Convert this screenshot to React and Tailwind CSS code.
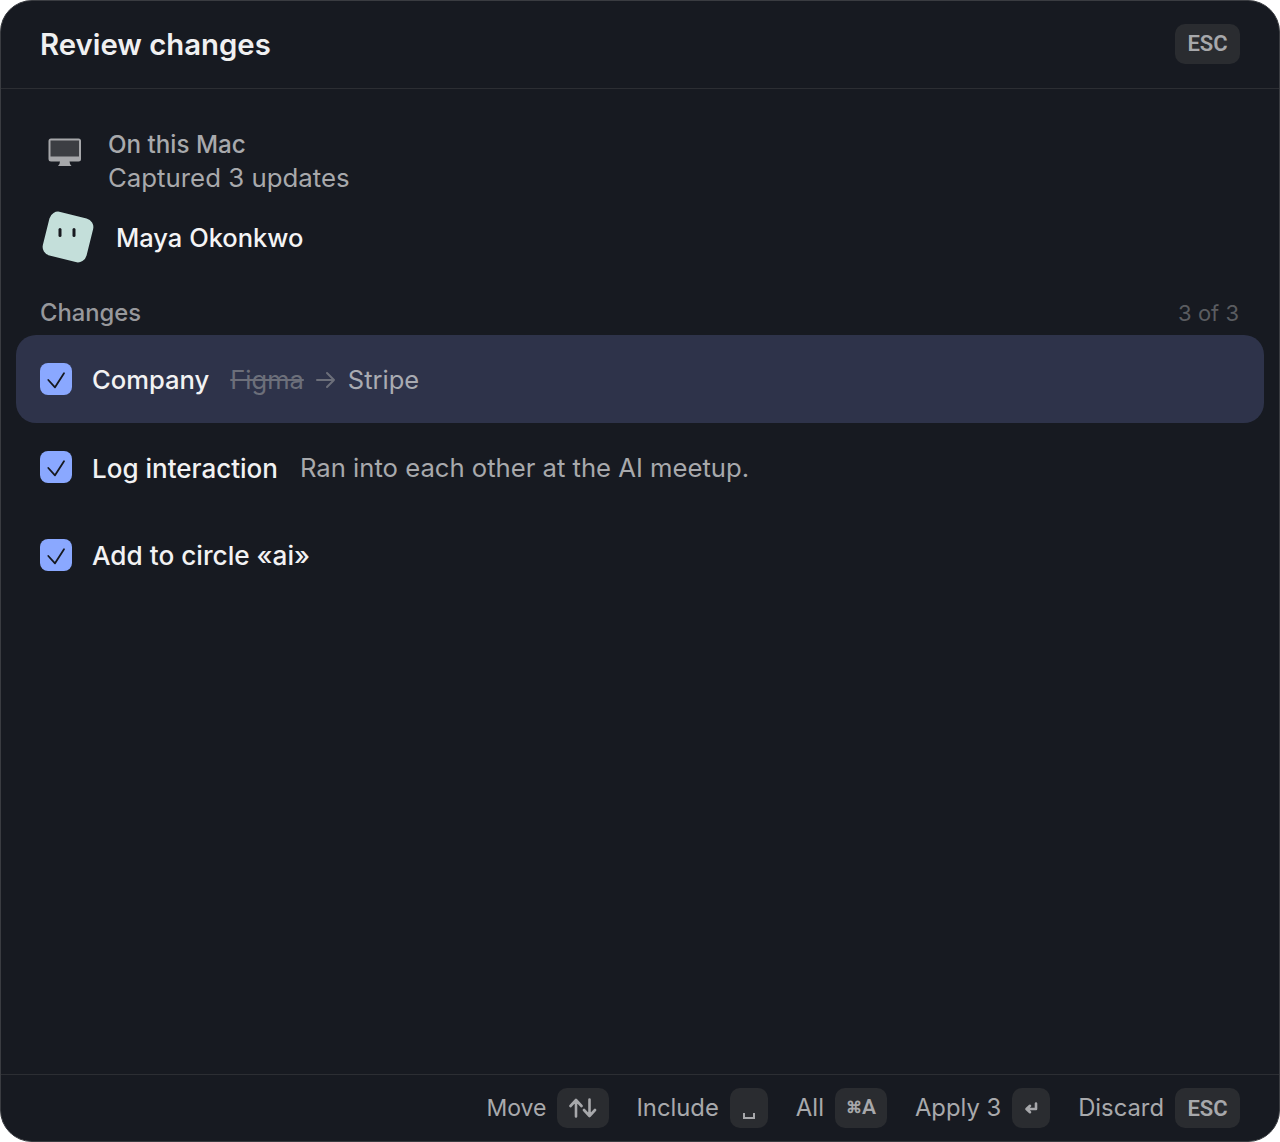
function Check() {
  return (
    <span className="flex h-8 w-8 shrink-0 items-center justify-center rounded-lg bg-[#8aa8ff]">
      <svg width="24" height="24" viewBox="0 0 24 24" fill="none" stroke="#16191f" strokeWidth="1.8" strokeLinecap="round" strokeLinejoin="round">
        <path d="M4.3 13 L11 20.3 L20 6.3" />
      </svg>
    </span>
  );
}

function Key({ children, className = "" }) {
  return (
    <span className={"flex h-10 items-center justify-center rounded-[10px] bg-[#2a2c30] font-['Roboto',sans-serif] text-[#a7a8ab] " + className}>
      {children}
    </span>
  );
}

function Hint({ label, size, className = "", children }) {
  return (
    <div className={"flex items-center gap-[11px] " + className}>
      <span className={"leading-10 text-[#a8a9ac] " + size}>{label}</span>
      {children}
    </div>
  );
}

export default function App() {
  return (
    <div className="h-[1142px] w-[1280px] bg-white font-['Inter',sans-serif]">
      <div className="flex h-full flex-col overflow-hidden rounded-[32px] border border-[#3a3c41] bg-[#171a21]">
        <header className="flex h-[88px] shrink-0 items-center justify-between border-b border-[#2c2e33] pb-[2px] pl-[39px] pr-[39px]">
          <h1 className="mt-[2px] text-[29.3px] leading-9 font-semibold text-[#f0f0f1]">Review changes</h1>
          <Key className="w-[65px] text-[22px] font-semibold">ESC</Key>
        </header>

        <main className="flex min-h-0 flex-1 flex-col px-[15px] pt-[39px]">
          <section className="px-6">
            <div className="flex items-start">
              <svg className="mt-[10px] ml-[8px] shrink-0" width="34" height="30" viewBox="0 0 34 30">
                <rect x="0.5" y="0.5" width="32.5" height="23" rx="2.5" fill="#a6a7aa" />
                <rect x="2.5" y="2.5" width="28.5" height="16" fill="#3c3e43" />
                <path d="M12 23 H21.5 L22 26 L23.5 28 H10 L11.5 26 Z" fill="#a6a7aa" />
              </svg>
              <div className="ml-[26px] leading-[33px] text-[#a8a9ac]">
                <p className="text-[24.2px] font-medium">On this Mac</p>
                <p className="text-[25.8px]">Captured 3 updates</p>
              </div>
            </div>
            <div className="mt-[19px] flex h-[50px] items-center">
              <svg className="-my-[2px] ml-[2px] -translate-y-px shrink-0" width="52" height="54" viewBox="0 0 52 54">
                <rect x="3.5" y="4.5" width="45" height="45" rx="9" fill="#c4dfda" transform="rotate(14 26 27)" />
                <rect x="16.5" y="18" width="3" height="9" rx="1.5" fill="#17191f" />
                <rect x="30.5" y="18" width="3" height="9" rx="1.5" fill="#17191f" />
              </svg>
              <span className="ml-[22px] text-[25.5px] leading-9 font-medium text-[#f4f4f5]">Maya Okonkwo</span>
            </div>
          </section>

          <div className="mt-[35px] flex h-[30px] items-center justify-between pl-6 pr-[25px]">
            <span className="text-[23.8px] font-medium text-[#97989c]">Changes</span>
            <span className="text-[22px] text-[#5a5c60]">3 of 3</span>
          </div>

          <ul className="mt-[7px]">
            <li className="flex h-[88px] items-center rounded-[20px] bg-[#2e334a] px-6 text-[25.5px]">
              <Check />
              <span className="mt-[2px] ml-5 text-[25.6px] font-medium text-[#f2f2f3]">Company</span>
              <span className="mt-[2px] ml-[21px] text-[#6c6f7a] line-through">Figma</span>
              <svg className="mx-[11.5px] mt-[2px] shrink-0" width="21" height="22" viewBox="0 0 21 22" fill="none" stroke="#6c6f7a" strokeWidth="2" strokeLinecap="round" strokeLinejoin="round">
                <path d="M2 11 H19 M12 4 L19 11 L12 18" />
              </svg>
              <span className="mt-[2px] text-[#a9abb2]">Stripe</span>
            </li>
            <li className="flex h-[88px] items-center px-6">
              <Check />
              <span className="mt-[2px] ml-5 text-[26px] font-medium text-[#f2f2f3]">Log interaction</span>
              <span className="mt-[2px] ml-[22px] text-[25.65px] text-[#a8a9ac]">Ran into each other at the AI meetup.</span>
            </li>
            <li className="flex h-[88px] items-center px-6">
              <Check />
              <span className="mt-[2px] ml-5 text-[26.2px] font-medium text-[#f2f2f3]">Add to circle «ai»</span>
            </li>
          </ul>
        </main>

        <footer className="flex h-[67px] shrink-0 items-center justify-end gap-7 border-t border-[#2c2e33] pr-[39px]">
          <Hint label="Move" size="text-[23px]" className="-mr-px">
            <Key className="w-[52px]">
              <svg width="28" height="20" viewBox="0 0 28 20" fill="none" stroke="#a7a8ab" strokeWidth="2.6" strokeLinecap="round" strokeLinejoin="round">
                <path d="M7 18.5 V2 M1.5 8 L7 2 L12.5 8 M20.5 1.5 V18 M15 12 L20.5 18 L26 12" />
              </svg>
            </Key>
          </Hint>
          <Hint label="Include" size="text-[23.8px]">
            <Key className="w-[38px]">
              <svg className="mt-[16px]" width="12" height="7" viewBox="0 0 12 7" fill="none" stroke="#a7a8ab" strokeWidth="2">
                <path d="M1 0 V5 H11 V0" />
              </svg>
            </Key>
          </Hint>
          <Hint label="All" size="text-[24px]">
            <Key className="w-[52px] text-[21px] font-semibold">
              <span className="text-[16px]">⌘</span>
              <span>A</span>
            </Key>
          </Hint>
          <Hint label="Apply 3" size="text-[23.8px]">
            <Key className="w-[38px]">
              <svg width="14" height="14" viewBox="0 0 14 14" fill="none" stroke="#a7a8ab" strokeWidth="2.6" strokeLinejoin="round" strokeLinecap="round">
                <path d="M12 2.5 V8 H3 M6 4.8 L2.5 8 L6 11.2" />
              </svg>
            </Key>
          </Hint>
          <Hint label="Discard" size="text-[23.8px]">
            <Key className="w-[65px] text-[22px] font-semibold">ESC</Key>
          </Hint>
        </footer>
      </div>
    </div>
  );
}
